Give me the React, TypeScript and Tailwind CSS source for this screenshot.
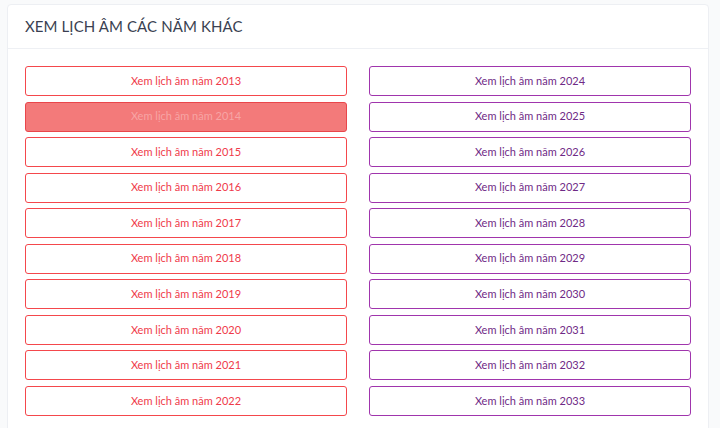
import React from "react";

const left = Array.from({ length: 10 }, (_, i) => 2013 + i);
const right = Array.from({ length: 10 }, (_, i) => 2024 + i);

export default function App() {
  return (
    <div className="w-[720px] h-[428px] bg-[#f9fafb] pt-[4px] pl-[7px] pr-[11px] overflow-hidden" style={{ fontFamily: "Lato, 'Noto Sans', sans-serif" }}>
      <div className="bg-white border border-[#edeff3] rounded-[4px] h-[440px]">
        <div className="h-[44px] border-b border-[#eef0f4] flex items-center pl-[17px]">
          <h2 className="text-[15px] text-[#3a3f51] tracking-[0.1px]">XEM LỊCH ÂM CÁC NĂM KHÁC</h2>
        </div>
        <div className="grid grid-cols-2 gap-x-[22px] px-[17px] pt-[17px]">
          <div className="flex flex-col gap-[5.55px]">
            {left.map((y) => (
              <button
                key={y}
                className={
                  y === 2014
                    ? "h-[30px] rounded-[3px] border border-[#e9464b] bg-[#f37a7a] text-[#f7a5a5] text-[11px]"
                    : "h-[30px] rounded-[3px] border border-[#f4474c] bg-white text-[#ef3a4a] text-[11px]"
                }
              >
                Xem lịch âm năm {y}
              </button>
            ))}
          </div>
          <div className="flex flex-col gap-[5.55px]">
            {right.map((y) => (
              <button
                key={y}
                className="h-[30px] rounded-[3px] border border-[#a035ad] bg-white text-[#6f2a86] text-[11px]"
              >
                Xem lịch âm năm {y}
              </button>
            ))}
          </div>
        </div>
      </div>
    </div>
  );
}
